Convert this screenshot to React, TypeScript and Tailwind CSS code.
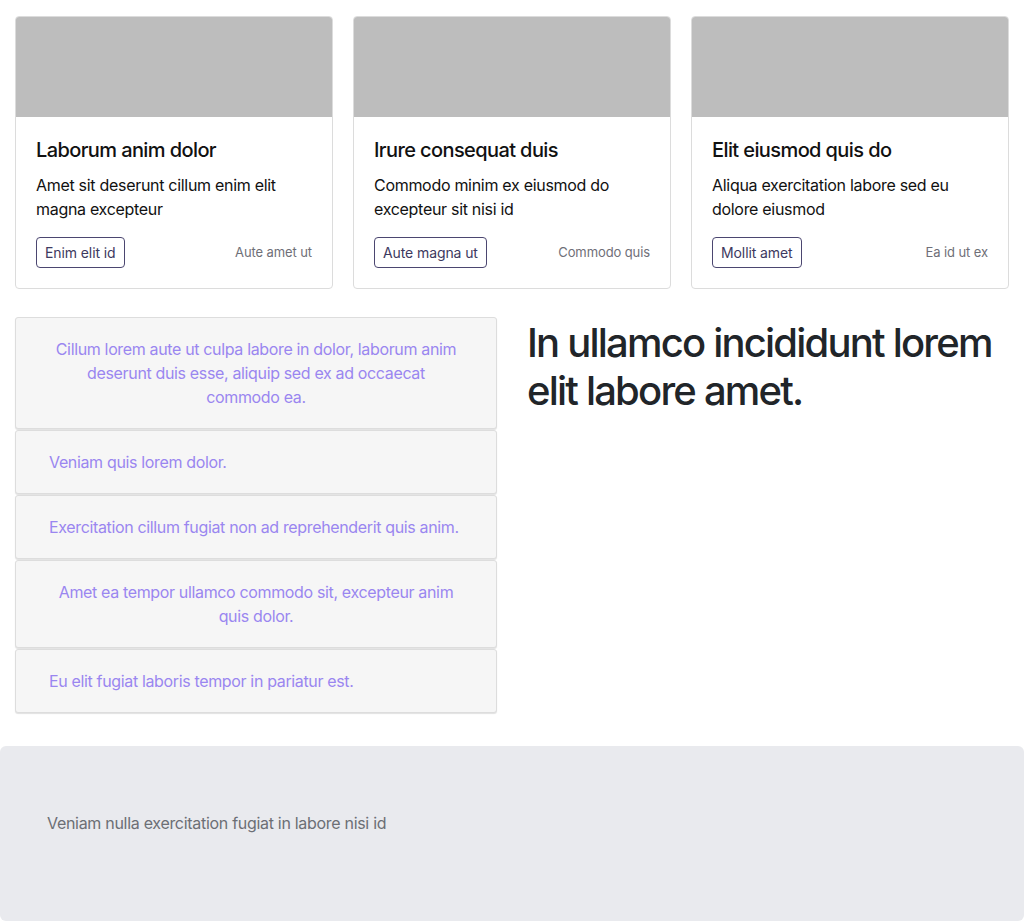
import React from 'react';

const cards = [
  { title: 'Laborum anim dolor', body: 'Amet sit deserunt cillum enim elit magna excepteur', btn: 'Enim elit id', meta: 'Aute amet ut' },
  { title: 'Irure consequat duis', body: 'Commodo minim ex eiusmod do excepteur sit nisi id', btn: 'Aute magna ut', meta: 'Commodo quis' },
  { title: 'Elit eiusmod quis do', body: 'Aliqua exercitation labore sed eu dolore eiusmod', btn: 'Mollit amet', meta: 'Ea id ut ex' },
];

const items = [
  { text: 'Cillum lorem aute ut culpa labore in dolor, laborum anim deserunt duis esse, aliquip sed ex ad occaecat commodo ea.', center: true },
  { text: 'Veniam quis lorem dolor.', center: false },
  { text: 'Exercitation cillum fugiat non ad reprehenderit quis anim.', center: false },
  { text: 'Amet ea tempor ullamco commodo sit, excepteur anim quis dolor.', center: true },
  { text: 'Eu elit fugiat laboris tempor in pariatur est.', center: false },
];

export default function App() {
  return (
    <div className="min-h-[921px] bg-white font-['Inter',sans-serif]">
      <div className="px-[15px] pt-4">
        {/* cards */}
        <div className="grid grid-cols-[repeat(3,318px)] gap-[20px]">
          {cards.map((c) => (
            <div key={c.title} className="border border-[#dcdcdc] rounded overflow-hidden bg-white">
              <div className="h-[100px] bg-[#bdbdbd]" />
              <div className="px-5 pt-[20px] pb-5">
                <h3 className="text-[20px] leading-[26px] font-medium text-[#111] tracking-[-0.6px]">{c.title}</h3>
                <p className="mt-[10px] text-[16px] leading-6 text-[#111] tracking-[-0.3px]">{c.body}</p>
                <div className="mt-[16px] flex items-center justify-between">
                  <button className="h-[31px] px-2 border border-[#4b4670] rounded text-[14px] text-[#3d3960] bg-white tracking-[-0.1px]">
                    {c.btn}
                  </button>
                  <span className="text-[13px] text-[#6f6f78] tracking-[-0.1px]">{c.meta}</span>
                </div>
              </div>
            </div>
          ))}
        </div>

        {/* list + heading */}
        <div className="mt-[28px] flex gap-[30px]">
          <div className="w-[482px] flex flex-col gap-[1px]">
            {items.map((it) => (
              <div
                key={it.text}
                className={`bg-[#f6f6f6] border border-[#dddddd] rounded-[3px] shadow-[0_1px_1px_rgba(0,0,0,0.12)] px-[33px] py-[19px] text-[16px] leading-6 text-[#9a86f0] tracking-[-0.35px] ${it.center ? 'text-center' : 'text-left'}`}
              >
                {it.text}
              </div>
            ))}
          </div>
          <h1 className="w-[482px] pt-[2px] text-[40px] leading-[48px] font-[550] text-[#212529] tracking-[-1.8px]">
            In ullamco incididunt lorem elit labore amet.
          </h1>
        </div>
      </div>

      {/* footer */}
      <div className="mt-[33px] h-[175px] bg-[#e9eaee] rounded-md px-[47px] pt-[65px]">
        <p className="text-[16px] leading-6 text-[#6c6f75] tracking-[-0.3px]">Veniam nulla exercitation fugiat in labore nisi id</p>
      </div>
    </div>
  );
}
